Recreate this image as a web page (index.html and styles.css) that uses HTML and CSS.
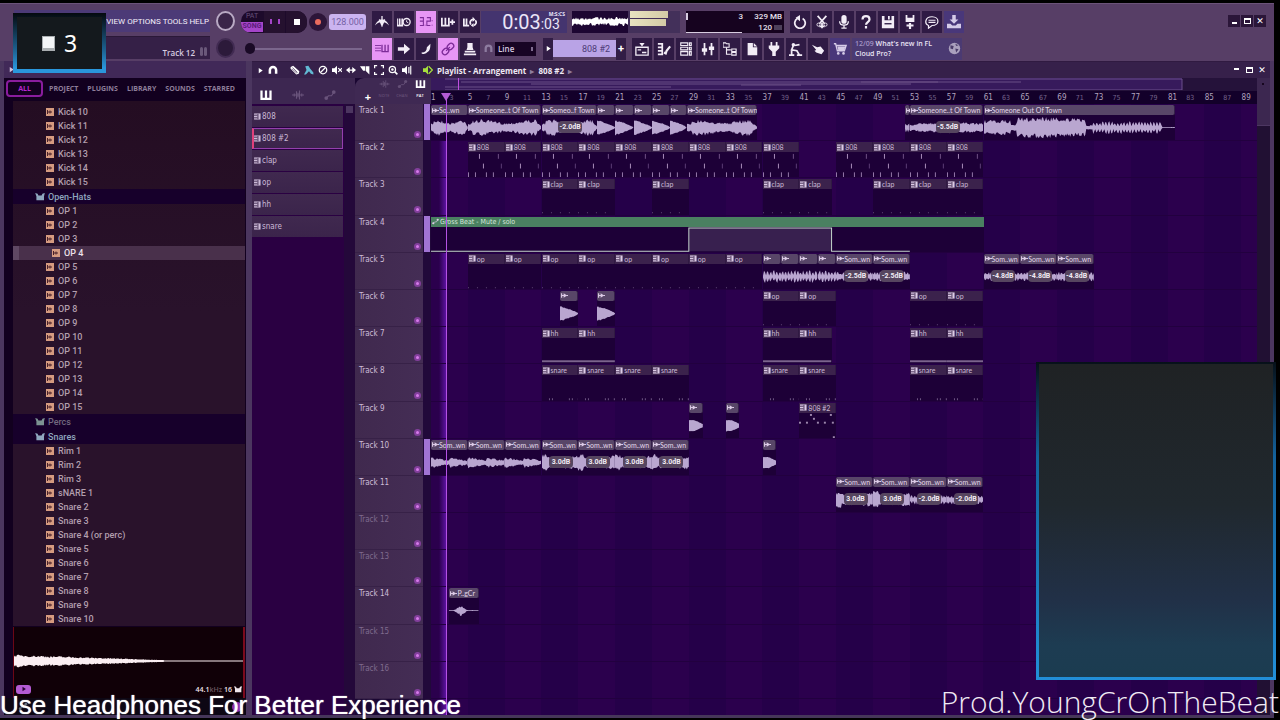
FILE: index.html
```html
<!DOCTYPE html>
<html lang="en">
<head>
<meta charset="utf-8">
<title>Playlist - Arrangement</title>
<link rel="stylesheet" href="styles.css">
</head>
<body>
<svg class="defs" aria-hidden="true">
  <symbol id="i-metro" viewBox="0 0 16 16"><path d="M0 12C2 7 5 5 8 5s6 2 8 7c-3-3-5-4-8-4s-5 1-8 4z" fill="currentColor"/><path d="M8 1v12M5 5l3 7 3-7" fill="none" stroke="currentColor" stroke-width="1.500"/></symbol>
  <symbol id="i-wait" viewBox="0 0 16 16"><path d="M0 4v8h7M3 4v7M6 4v7" fill="none" stroke="currentColor" stroke-width="2"/><circle cx="11" cy="8" r="4" fill="none" stroke="currentColor" stroke-width="1.5"/><path d="M11 6v2l2 1" fill="none" stroke="currentColor"/></symbol>
  <symbol id="i-count" viewBox="0 0 16 16"><path d="M1 3h4v9H1M1 7h4M7 12v-1M9 3h4v4H9v5h4M15 6v1M15 11v1" fill="none" stroke="currentColor" stroke-width="1.200"/></symbol>
  <symbol id="i-keysplus" viewBox="0 0 16 16"><path d="M1 3v9h8V3M5 3v9" fill="none" stroke="currentColor" stroke-width="2"/><path d="M13 5v6M10 8h6" stroke="currentColor" stroke-width="2"/></symbol>
  <symbol id="i-loop" viewBox="0 0 16 16"><path d="M1 4v8h6M4 4v7" fill="none" stroke="currentColor" stroke-width="2"/><path d="M9 11c-2-3 0-6 3-6M12 12c3-1 4-4 2-6" fill="none" stroke="currentColor" stroke-width="2"/><path d="M11 2l3 3-3 3zM12 9v5l-3-2z" fill="currentColor"/></symbol>
  <symbol id="i-type" viewBox="0 0 16 16"><path d="M0 4h7M0 7h7M0 10h7" stroke="currentColor"/><path d="M8 3v8h7V3M11.500 3v8" fill="none" stroke="currentColor" stroke-width="1.500"/></symbol>
  <symbol id="i-arrow" viewBox="0 0 16 16"><path d="M1 6h7V2l7 6-7 6v-4H1z" fill="currentColor"/></symbol>
  <symbol id="i-slide" viewBox="0 0 16 16"><path d="M3 12c4 0 6-2 6-6l4-4c0 4 0 8-4 10-2 2-4 2-6 1z" fill="currentColor"/></symbol>
  <symbol id="i-link" viewBox="0 0 16 16"><g fill="none" stroke="currentColor" stroke-width="1.500" transform="rotate(-45 8 8)"><rect x="0" y="5" width="8" height="6" rx="3"/><rect x="8" y="5" width="8" height="6" rx="3"/><path d="M5 8h6"/></g></symbol>
  <symbol id="i-stamp" viewBox="0 0 16 16"><path d="M5 1h6v5l1 3H4l1-3zM2 10h12v2H2zM1 13h14v2H1z" fill="currentColor"/></symbol>
  <symbol id="i-magnet" viewBox="0 0 16 16"><path d="M3 14V8a5 5 0 0 1 10 0v6" fill="none" stroke="currentColor" stroke-width="4"/></symbol>
  <symbol id="i-play" viewBox="0 0 16 16"><path d="M4 2l9 6-9 6z" fill="currentColor"/></symbol>
  <symbol id="i-plist" viewBox="0 0 16 16"><path d="M1 6h14v9H1zM3 9h4M8 12h5" fill="none" stroke="currentColor" stroke-width="1.500"/><path d="M5 1h6L8 5z" fill="currentColor"/></symbol>
  <symbol id="i-roll" viewBox="0 0 16 16"><path d="M1 2h5v12H1M1 6h4M1 10h4" fill="none" stroke="currentColor" stroke-width="2"/><path d="M8 12l2 1 1-3 4-5" fill="none" stroke="currentColor" stroke-width="2.500"/></symbol>
  <symbol id="i-rack" viewBox="0 0 16 16"><path d="M2 1h8v3H2zM2 6h8v3H2zM2 11h8v4H2zM12 1h2v3h-2zM12 6h2v3h-2zM12 11h2v4h-2z" fill="none" stroke="currentColor" stroke-width="1.300"/></symbol>
  <symbol id="i-mixer" viewBox="0 0 16 16"><path d="M4 1v14M12 1v14" stroke="currentColor" stroke-width="2"/><path d="M1 7h6v4H1zM9 5h6v4H9z" fill="currentColor"/></symbol>
  <symbol id="i-tree" viewBox="0 0 16 16"><path d="M0 1h3l1 1h3v4H0z" fill="none" stroke="currentColor" stroke-width="1.200"/><path d="M4 6v8h5M4 9h5M10 8h5v3h-5zM10 12h5v3h-5z" fill="none" stroke="currentColor" stroke-width="1.300"/></symbol>
  <symbol id="i-file" viewBox="0 0 16 16"><path d="M3 1h6v5h5v9H3z" fill="currentColor"/><path d="M10 1l4 4h-4z" fill="currentColor"/></symbol>
  <symbol id="i-plug" viewBox="0 0 16 16"><path d="M4 0h2v4h4V0h2v4h2v3l-4 4v5H6v-5L2 7V4h2z" fill="currentColor"/></symbol>
  <symbol id="i-tempo" viewBox="0 0 16 16"><circle cx="5" cy="3" r="2" fill="currentColor"/><path d="M5 4L3 9l6 1 3 5M3 9v5M0 15h6M9 15h6M6 4l6-1" fill="none" stroke="currentColor" stroke-width="2"/></symbol>
  <symbol id="i-hand" viewBox="0 0 16 16"><path d="M1 3l6 3 4-1 4 5-3 4-6-2-2-2 2-1z" fill="currentColor"/></symbol>
  <symbol id="i-cart" viewBox="0 0 16 16"><path d="M1 2h2l2 8h8l2-6H4" fill="none" stroke="currentColor" stroke-width="1.500"/><path d="M5 5h9l-1 4H6z" fill="currentColor"/><circle cx="6" cy="13" r="1.500" fill="currentColor"/><circle cx="12" cy="13" r="1.500" fill="currentColor"/></symbol>
  <symbol id="i-undo" viewBox="0 0 16 16"><path d="M5 4a6 6 0 1 0 6 0" fill="none" stroke="currentColor" stroke-width="2"/><path d="M8 0v7L3 3z" fill="currentColor"/></symbol>
  <symbol id="i-cut" viewBox="0 0 16 16"><path d="M3 1l8 9M13 1L5 10M8 9v6M5 13h6" fill="none" stroke="currentColor" stroke-width="2"/><circle cx="4" cy="11" r="1.800" fill="none" stroke="currentColor"/><circle cx="12" cy="11" r="1.800" fill="none" stroke="currentColor"/></symbol>
  <symbol id="i-mic" viewBox="0 0 16 16"><rect x="5" y="0" width="6" height="10" rx="3" fill="currentColor"/><path d="M3 7c0 6 10 6 10 0M8 11v4M5 15h6" fill="none" stroke="currentColor" stroke-width="1.500"/></symbol>
  <symbol id="i-help" viewBox="0 0 16 16"><path d="M4 5c0-5 8-5 8 0 0 3-4 3-4 6M8 12.500v3" fill="none" stroke="currentColor" stroke-width="2.500"/></symbol>
  <symbol id="i-save" viewBox="0 0 16 16"><path d="M1 1h3v5h8V1h3v14H1zM8 1h2v4H8z" fill="currentColor"/><path d="M4 10h8" stroke="#2b1740" stroke-width="1.500"/></symbol>
  <symbol id="i-savenew" viewBox="0 0 16 16"><path d="M3 0h2v3h6V0h2v8H3z" fill="currentColor"/><path d="M8 9v7M4 12h8" stroke="currentColor" stroke-width="2.500"/></symbol>
  <symbol id="i-chat" viewBox="0 0 16 16"><path d="M8 2c9 0 9 10 0 10l-4 3v-3C-1 10 0 2 8 2zM4 6h8M4 8.500h8" fill="none" stroke="currentColor" stroke-width="1.400"/></symbol>
  <symbol id="i-down" viewBox="0 0 16 16"><path d="M6 0h4v5h3l-5 5-5-5h3zM0 10h4l2 2h4l2-2h4v5H0z" fill="currentColor"/></symbol>
  <symbol id="i-globe" viewBox="0 0 16 16"><circle cx="8" cy="8" r="7" fill="#aaa0bd"/><path d="M3 4l4 1-1 4-3-1zM9 8l4 1-3 4zM9 2l4 2-3 1z" fill="#4a3b69"/></symbol>
  <symbol id="i-pencil" viewBox="0 0 16 16"><path d="M1 3l4-2 10 9-1 4-4 1L1 6z" fill="currentColor"/><path d="M4 4l8 8M3 6l8 7" stroke="#38224b"/></symbol>
  <symbol id="i-brush" viewBox="0 0 16 16"><path d="M2 2l5-1 3 5 5 6v3l-4-1-3-4-5 5H0l4-7z" fill="currentColor"/></symbol>
  <symbol id="i-no" viewBox="0 0 16 16"><circle cx="8" cy="8" r="6" fill="none" stroke="currentColor" stroke-width="2"/><path d="M4 12l8-8" stroke="currentColor" stroke-width="2"/></symbol>
  <symbol id="i-mute" viewBox="0 0 16 16"><path d="M0 5h4l4-4v14l-4-4H0z" fill="currentColor"/><path d="M10 5l6 6M16 5l-6 6" stroke="currentColor" stroke-width="2"/></symbol>
  <symbol id="i-slip" viewBox="0 0 16 16"><path d="M0 8l6-5v4h4V3l6 5-6 5V9H6v4z" fill="currentColor"/></symbol>
  <symbol id="i-slice" viewBox="0 0 16 16"><path d="M0 2h8v7H5zM9 2h6v13L9 9z" fill="currentColor"/></symbol>
  <symbol id="i-sel" viewBox="0 0 16 16"><path d="M1 5V1h4M11 1h4v4M15 11v4h-4M5 15H1v-4" fill="none" stroke="currentColor" stroke-width="2"/></symbol>
  <symbol id="i-zoom" viewBox="0 0 16 16"><circle cx="7" cy="7" r="5" fill="none" stroke="currentColor" stroke-width="2"/><circle cx="7" cy="7" r="2" fill="currentColor"/><path d="M11 11l4 4" stroke="currentColor" stroke-width="2.500"/></symbol>
  <symbol id="i-spk" viewBox="0 0 16 16"><path d="M0 5h4l4-4v14l-4-4H0z" fill="currentColor"/><path d="M11 3v10M14 1v14" stroke="currentColor" stroke-width="1.800"/></symbol>
  <symbol id="i-out" viewBox="0 0 16 16"><path d="M0 5h4l4-4v14l-4-4H0z" fill="currentColor"/><path d="M9 2l6 6-6 6" fill="none" stroke="currentColor" stroke-width="2"/></symbol>
  <symbol id="i-keys" viewBox="0 0 16 16"><path d="M2 2v11h12V2M8 2v10" fill="none" stroke="currentColor" stroke-width="3"/></symbol>
  <symbol id="i-wave" viewBox="0 0 16 16"><path d="M0 8h16M3 6v4M6 3v10M8 5v6M10 2v12M13 6v4" stroke="currentColor" stroke-width="1.500"/></symbol>
  <symbol id="i-auto" viewBox="0 0 16 16"><path d="M2 13l4-4h4l4-6" fill="none" stroke="currentColor" stroke-width="1.500"/><circle cx="3" cy="12" r="2.500" fill="currentColor"/><circle cx="13" cy="4" r="2.500" fill="currentColor"/></symbol>
  <symbol id="i-pat" viewBox="0 0 8 8"><path d="M0 .5h7.500v7H0z" fill="currentColor"/><path d="M0 2.500h4M0 5.500h4M4.500 1v6" stroke="#3a2449"/></symbol>
  <symbol id="i-clip" viewBox="0 0 8 8"><path d="M.7 1.500v5M1 4h3M6 4h2" stroke="currentColor" stroke-width="1.300"/><path d="M3 1.500L7 4 3 6.500z" fill="currentColor"/></symbol>
  <symbol id="i-sample" viewBox="0 0 8 8"><path d="M0 0h8v8H0z" fill="#d69b80"/><path d="M1.500 2v4M2 4h4M4 2.500v3" stroke="#4a2029"/></symbol>
  <symbol id="i-folder" viewBox="0 0 12 10"><path d="M0 0l3 1 1 2h4l1-2 3-1-1 4v5H1.500V4z" fill="currentColor"/></symbol>
</svg>

<div class="app">
  <header class="toolbar">
    <div class="group menus">
      <nav class="menu"><button>VIEW</button><button>OPTIONS</button><button>TOOLS</button><button>HELP</button></nav>
      <div class="hint"><span>Track 12</span><i class="pill"></i><i class="pill"></i></div>
    </div>
    <div class="group knobs"><i class="knob"></i><i class="knob dim"></i></div>
    <div class="group transport">
      <div class="row">
        <div class="play"><span class="mode"><span>PAT</span><b>SONG</b></span><button class="pause" aria-label="Pause"></button><button class="stop" aria-label="Stop"></button></div>
        <button class="rec" aria-label="Record"></button>
        <input class="tempo" aria-label="Tempo" value="128.000">
      </div>
      <div class="row"><input class="pos" type="range" min="0" max="100" value="0" aria-label="Song position"></div>
    </div>
    <div class="group main">
      <div class="row">
        <div class="btns" data-icons="metro wait count* keysplus loop"></div>
        <div class="time"><span>0:03<small>:03</small></span><em>M:S:CS</em></div>
        <svg class="scope" viewBox="0 0 56 22" preserveAspectRatio="none" data-scope></svg>
        <div class="peaks"><i></i><i></i></div>
        <div class="cpu"><span class="poly">3</span><span class="mem">329 MB<br>120 <i></i></span></div>
        <div class="btns" data-icons="undo cut mic help save savenew chat down!"></div>
      </div>
      <div class="row">
        <div class="btns" data-icons="type* arrow slide link* stamp"></div>
        <svg class="snapicon"><use href="#i-magnet"/></svg>
        <select class="snap" aria-label="Snap"><option>Line</option></select>
        <button class="mini first" aria-label="Pattern menu"><svg><use href="#i-play"/></svg></button>
        <input class="pattern" aria-label="Pattern" value="808 #2">
        <button class="mini" aria-label="Add pattern">+</button>
        <div class="btns" data-icons="plist roll rack mixer tree file plug tempo hand cart!"></div>
        <a class="news" href="#"><span><s>12/09</s> What's new in FL<br>Cloud Pro?</span><svg><use href="#i-globe"/></svg></a>
      </div>
    </div>
    <div class="winbtns"><button aria-label="Minimize"><i class="min"></i></button><button aria-label="Maximize"><i class="max"></i></button><button aria-label="Close">✕</button></div>
  </header>

  <main class="work">
    <aside class="browser">
      <div class="bhead"><svg><use href="#i-play"/></svg></div>
      <nav class="tabs"><button class="on">ALL</button><button>PROJECT</button><button>PLUGINS</button><button>LIBRARY</button><button>SOUNDS</button><button>STARRED</button></nav>
      <ul class="tree" id="tree"></ul>
      <div class="preview">
        <svg viewBox="0 0 230 68" preserveAspectRatio="none" data-preview></svg>
        <div class="pinfo"><button aria-label="Play sample"><svg><use href="#i-play"/></svg></button><span>44.1<s>kHz</s> 16</span><svg class="fold"><use href="#i-folder"/></svg></div>
      </div>
      <div class="status"><svg><use href="#i-auto"/></svg><i></i></div>
    </aside>

    <section class="playlist">
      <div class="ptitle">
        <div class="tools">
          <svg class="t-s"><use href="#i-play"/></svg><svg class="t-m"><use href="#i-magnet"/></svg><svg><use href="#i-pencil"/></svg><svg class="t-b"><use href="#i-brush"/></svg><svg><use href="#i-no"/></svg><svg><use href="#i-mute"/></svg><svg><use href="#i-slip"/></svg><svg><use href="#i-slice"/></svg><svg><use href="#i-sel"/></svg><svg><use href="#i-zoom"/></svg><svg><use href="#i-spk"/></svg>
        </div>
        <svg class="t-o"><use href="#i-out"/></svg>
        <h1>Playlist - Arrangement <s>▸</s> 808 #2 <s>▸</s></h1>
        <div class="winbtns flat"><button aria-label="Minimize"><i class="min"></i></button><button aria-label="Restore"><i class="max"></i></button><button aria-label="Close">✕</button></div>
      </div>
      <div class="pbody">
        <div class="picker">
          <div class="pktabs"><svg class="on"><use href="#i-keys"/></svg><svg><use href="#i-wave"/></svg><svg><use href="#i-auto"/></svg></div>
          <div class="pklist">
            <ul id="patterns"></ul>
            <div class="pkscroll"><i></i></div>
          </div>
        </div>
        <div class="arrange">
          <div class="ahead">
            <div class="corner">
              <button aria-label="Add track">+</button>
              <span><svg><use href="#i-wave"/></svg>NOTE</span><span><svg><use href="#i-auto"/></svg>CHAN</span><span class="on"><svg><use href="#i-keys"/></svg>PAT</span>
            </div>
            <div class="scales">
              <div class="minimap"><svg viewBox="0 0 826 12" preserveAspectRatio="none" data-map></svg></div>
              <div class="ruler" id="ruler"></div>
            </div>
            <div class="corner2"><i></i></div>
          </div>
          <div class="abody">
            <div class="heads" id="heads"></div>
            <div class="lanes" id="lanes"></div>
            <div class="vscroll"><i></i></div>
          </div>
        </div>
      </div>
    </section>
  </main>
</div>

<div class="badge"><i></i><span>3</span></div>
<div class="panel"></div>
<p class="caption left">Use Headphones For Better Experience</p>
<p class="caption right">Prod.YoungCrOnTheBeat</p>
<script src="script.js"></script>
</body>
</html>
```
FILE: styles.css
```css
* { box-sizing: border-box; }
html, body { height: 100%; margin: 0; }
body { background: #000; overflow: hidden; position: relative; font-family: Roboto, "Open Sans", sans-serif; color: #d8cde0; }
button, input, select { font: inherit; color: inherit; border: 0; padding: 0; margin: 0; background: none; border-radius: 0; }
ul { list-style: none; margin: 0; padding: 0; }
s { text-decoration: none; }
svg { display: block; }
.defs { display: none; }
.app { height: 100%; padding: 3px 6px 2px 0; display: flex; flex-direction: column; }

/* top toolbar */
.toolbar { height: 58px; flex: none; display: flex; background: #573e66; border-top: 1px solid #6b5379; padding: 6px 6px 0 4px; }
.group { display: flex; flex-direction: column; gap: 4px; }
.row { display: flex; height: 23px; align-items: center; }
.menus { width: 206px; padding-left: 10px; }
.menu { height: 22px; background: #4c3a77; display: flex; align-items: center; justify-content: flex-end; gap: 2px; padding-right: 1px; font-size: 8px; font-weight: 400; color: #f4effa; }
.hint { height: 23px; background: #352047; border-top: 1px solid #2a1838; display: flex; align-items: flex-end; justify-content: flex-end; padding: 0 3px 1px 0; font: 600 8px/11px "Open Sans", sans-serif; color: #d8cde0; }
.hint span { margin-right: 4px; }
.pill { width: 3px; height: 9px; margin: 0 0 2px 1px; border-radius: 2px; background: #6a587a; }
.knobs { width: 31px; align-items: center; gap: 7px; padding-top: 1px; }
.knob { width: 19px; height: 20px; border-radius: 50%; background: #3a2549; border: 2px solid #b9aac4; }
.knob.dim { background: #2c1a3a; border-color: #412b52; }
.transport { width: 131px; }
.play { display: flex; width: 66px; height: 22px; background: #1d0a2b; border-radius: 10px; overflow: hidden; align-items: center; }
.mode { width: 22px; font-size: 7px; line-height: 9px; text-align: center; color: #65507a; }
.mode span { display: block; height: 10px; }
.mode b { display: block; height: 10px; background: #a545c9; color: #5b1b7a; border-radius: 0 0 0 6px; }
.pause, .stop { flex: 1; height: 22px; background: #25112f; margin-left: 1px; display: flex; align-items: center; justify-content: center; }
.pause::before { content: ""; width: 6px; height: 5px; border: solid #a545c9; border-width: 0 2px; }
.stop::before { content: ""; width: 6px; height: 6px; background: #fff; }
.rec { width: 18px; height: 18px; border-radius: 50%; background: #2d1539; margin: 0 2px; display: flex; align-items: center; justify-content: center; }
.rec::before { content: ""; width: 6px; height: 6px; border-radius: 50%; background: #ea6b5e; }
.tempo { width: 37px; height: 16px; background: #cbb4f0; border-radius: 3px; color: #7561a5; font-size: 9px; text-align: center; }
.pos { appearance: none; width: 117px; margin-left: 4px; height: 14px; background: linear-gradient(#7b668d, #7b668d) center / 100% 2px no-repeat; }
.pos::-webkit-slider-thumb { appearance: none; width: 10px; height: 11px; border-radius: 5px; background: #1a0a26; }
.btns { display: flex; gap: 2px; }
.btns button { width: 20px; height: 22px; background: #2f1a44; color: #f2ecf6; display: flex; align-items: center; justify-content: center; }
.btns svg { width: 14px; height: 14px; }
.btns .lit { background: #e796f5; color: #7c2b98; }
.btns .blue { background: #49377a; color: #d5cbe8; }
.time { width: 86px; height: 22px; margin: 0 5px 0 1px; background: #44346f; display: flex; justify-content: center; font-size: 20px; line-height: 22px; color: #ebe6f8; position: relative; padding-left: 14px; }
.time small { font-size: 14px; }
.time em { position: absolute; right: 2px; top: 0; font: 700 5px/6px "Open Sans", sans-serif; }
.scope { width: 56px; height: 22px; background: #1d0632; flex: none; }
.peaks { width: 52px; height: 22px; padding: 0 0 0 2px; background: #43305a; display: flex; flex-direction: column; gap: 1px; }
.peaks i { height: 7px; width: 38px; background: linear-gradient(90deg, #e9e3c0, #d3cba6); }
.peaks i + i { width: 36px; }
.cpu { width: 98px; height: 22px; margin: 0 6px 0 6px; background: linear-gradient(#d8cde0, #d8cde0) 0 2px / 2px 7px no-repeat, linear-gradient(90deg, #d8cde0 57%, transparent 57%) 0 100% / 100% 1px no-repeat, #16031f; display: flex; justify-content: flex-end; font-size: 8px; font-weight: 500; line-height: 11px; color: #e8e0ee; }
.poly { margin-right: 7px; }
.mem { text-align: right; width: 34px; white-space: nowrap; padding-right: 2px; }
.mem i { display: inline-block; width: 8px; height: 5px; background: #4d405a; }
.snapicon { width: 9px; height: 11px; color: #8e7ca0; margin: 0 2px 0 4px; }
.snap { appearance: none; width: 41px; height: 14px; padding-left: 3px; font: 600 8px/14px "Open Sans", sans-serif; background: #170424 linear-gradient(#7f6c90, #7f6c90) 36px 5px / 2px 4px no-repeat; }
.mini { width: 10px; height: 22px; background: #321d46; display: flex; align-items: center; justify-content: center; color: #fff; font-size: 11px; font-weight: 700; }
.mini svg { width: 7px; height: 7px; }
.mini.first { margin-left: 7px; }
.mini + .btns { margin-left: 6px; }
.pattern { width: 63px; height: 17px; background: #b9a3e6; color: #4d3b78; text-align: right; padding-right: 6px; font-size: 9px; }
.news { display: flex; width: 110px; height: 22px; margin-left: 2px; padding: 0 1px 0 3px; align-items: center; justify-content: space-between; background: #4b3a72; color: #eae4f4; text-decoration: none; font: 600 7px/10px "Open Sans", sans-serif; white-space: nowrap; }
.news s { color: #a292c4; }
.news svg { width: 13px; height: 13px; flex: none; }
.winbtns { display: flex; margin: 5px 2px 0 auto; gap: 1px; height: 12px; color: #fff; }
.winbtns button { width: 12px; background: #2b1639; display: flex; align-items: center; justify-content: center; font: 700 9px/12px "DejaVu Sans", sans-serif; }
.winbtns .min { width: 5px; height: 2px; background: #fff; margin-top: 4px; }
.winbtns .max { width: 7px; height: 6px; border: 1px solid #fff; border-top-width: 2px; }
.winbtns.flat { margin: 0 2px 0 auto; }
.winbtns.flat button { background: none; }
.flat .min { margin: 0 0 2px; }

.work { flex: 1; min-height: 0; display: flex; background: #4b365f; border-bottom: 3px solid #46365a; padding: 0 4px; }

/* sample browser */
.browser { width: 242px; flex: none; display: flex; flex-direction: column; background: #12001f; }
.bhead { height: 17px; background: #412958; flex: none; padding: 5px 0 0 4px; color: #d0c2dc; }
.bhead svg { width: 7px; height: 7px; }
.tabs { height: 23px; flex: none; display: flex; align-items: center; gap: 9px; padding: 0 0 2px 2px; font: 700 7px/9px "Open Sans", sans-serif; color: #8d7d99; }
.tabs .on { width: 37px; height: 17px; margin-right: -3px; border: 2px solid #8a1d9e; border-radius: 4px; color: #b726cf; }
.tree { flex: 1; min-height: 0; overflow: hidden; margin: 0 1px 0 9px; padding-top: 4px; background: linear-gradient(#240d22, #29122b 40%, #29122b); font-size: 9px; font-weight: 500; color: #b39fae; }
.tree li { height: 14px; line-height: 14px; display: flex; align-items: center; padding-left: 33px; }
.tree svg { width: 8px; height: 8px; margin-right: 4px; }
.tree .dir { height: 15px; padding-left: 22px; background: #17002b; color: #8fa7bf; }
.tree .dir svg { width: 10px; height: 8px; margin-right: 3px; }
.tree .closed { color: #72697f; }
.tree .closed svg { color: #7c9292; }
.tree .sel { padding-left: 33px; background: #49304b; color: #eee2ea; border-left: 6px solid #5f4863; }
.preview { height: 71px; flex: none; margin: 1px 1px 0 9px; background: #100007; border-left: 1px solid #6c0715; border-right: 2px solid #7b0a1c; display: grid; }
.preview > * { grid-area: 1 / 1; }
.preview > svg { width: 100%; height: 68px; }
.pinfo { align-self: end; height: 18px; display: flex; align-items: center; font: 600 7px/9px "Open Sans", sans-serif; color: #f0e6ec; padding: 0 1px 0 2px; }
.pinfo button { width: 15px; height: 9px; border-radius: 3px; background: #b45bd3; color: #2a0635; display: flex; align-items: center; justify-content: center; margin-right: auto; }
.pinfo button svg { width: 6px; height: 6px; }
.pinfo s { color: #6a565f; }
.fold { width: 8px; height: 7px; margin-left: 2px; }
.status { height: 17px; flex: none; background: #0d0714; display: flex; align-items: center; justify-content: space-between; padding: 0 4px 0 12px; color: #65707c; }
.status svg { width: 14px; height: 9px; }
.status i { width: 10px; height: 10px; border-radius: 50%; background: #8a2ea8; }

/* playlist window */
.playlist { flex: 1; min-width: 0; display: flex; flex-direction: column; margin-left: 6px; background: #2a0042; }
.ptitle { height: 17px; flex: none; display: flex; align-items: center; background: #36204a; border-top: 1px solid #301a41; color: #fff; }
.tools { display: flex; gap: 4px; padding-left: 5px; align-items: center; }
.tools svg { width: 10px; height: 10px; }
.tools .t-s { width: 7px; height: 7px; }
.tools .t-m { margin-right: 8px; }
.tools .t-b { color: #62b9d4; }
.t-o { width: 10px; height: 10px; margin: 0 4px 0 11px; color: #a6e03c; }
.ptitle h1 { margin: 0; font: 700 8px/15px "Open Sans", sans-serif; color: #efe9f3; }
.ptitle s { color: #8f7e9e; margin: 0 2px; }
.pbody { flex: 1; min-height: 0; display: flex; }
.picker { width: 103px; flex: none; display: flex; flex-direction: column; }
.pktabs { height: 26px; flex: none; background: #3d2751; display: flex; gap: 20px; padding: 11px 0 0 8px; color: #69537b; }
.pktabs svg { width: 12px; height: 12px; }
.pktabs .on { color: #fff; }
.pklist { flex: 1; display: flex; justify-content: space-between; }
.pklist ul { width: 91px; display: flex; flex-direction: column; gap: 1px; padding-top: 2px; }
.pklist li { height: 21px; background: linear-gradient(#40294f, #3b244b); display: flex; align-items: center; padding-left: 2px; font: 8px/12px "DejaVu Sans Condensed", sans-serif; color: #cbb9d6; }
.pklist li svg { width: 7px; height: 7px; margin-right: 1px; }
.pklist .sel { border: 1px solid #9340ac; border-left: 2px solid #e0407a; padding-left: 0; }
.pkscroll { width: 11px; background: #24083a; }
.pkscroll i { display: block; height: 9px; margin: 1px 1px 0; background: #4c3560; border: 1px solid #24083a; }
.arrange { flex: 1; min-width: 0; display: flex; flex-direction: column; background: #1a0632; }
.ahead { height: 26px; flex: none; display: flex; }
.corner { width: 76px; flex: none; background: #3f2953; border-radius: 9px 0 0 0; display: flex; color: #644f76; font: 600 4px/6px "Open Sans", sans-serif; }
.corner span { width: 18px; display: flex; flex-direction: column; align-items: center; gap: 4px; padding-top: 1px; }
.corner svg { width: 11px; height: 10px; }
.corner .on { color: #fff; }
.corner button { width: 20px; padding: 12px 0 0 6px; color: #fff; font-size: 11px; line-height: 12px; font-weight: 700; font-family: "Open Sans", sans-serif; }
.scales { flex: 1; min-width: 0; }
.minimap { height: 13px; background: #25123a; }
.minimap svg { width: 100%; height: 12px; }
.ruler { height: 13px; display: flex; background: #13002a; font: 8px/14px "DejaVu Sans Condensed", sans-serif; color: #a08fae; }
.ruler span { flex: 20 1 0; min-width: 0; overflow: visible; white-space: nowrap; font-size: 7px; color: #75648a; }
.ruler .major { font-size: 8px; color: #b0a3bd; }
.ruler .last { flex-grow: 17; }
.corner2 { width: 13px; background: #3c2750; }
.corner2 i { display: block; width: 2px; height: 2px; margin: 5px; background: #16061f; }
.abody { flex: 1; min-height: 0; display: flex; }
.heads { width: 76px; flex: none; margin-bottom: 16px; display: grid; grid-auto-rows: 1fr; }
.head { display: flex; background: #21093a; }
.head .name { width: 68px; background: linear-gradient(90deg, #40294e, #442d55); border-bottom: 1px solid #372147; display: flex; justify-content: space-between; padding: 1px 2px 0 4px; font: 8px/12px "DejaVu Sans Condensed", sans-serif; color: #cdbdd7; }
.head .empty { color: #7f6a8e; }
.head button { width: 7px; height: 7px; border-radius: 50%; background: #d67aea; border: 2px solid #833f9c; align-self: flex-end; margin-bottom: 2px; }
.head .strip { width: 6px; margin: 0 0 1px 1px; }
.head .used { background: #a174d4; }
.lanes { flex: 1; min-width: 0; position: relative; padding-bottom: 16px; display: grid; grid-auto-rows: 1fr; background: repeating-linear-gradient(90deg, #2b004d 0, #2b004d 4.459%, #250049 4.459%, #250049 8.918%); }
.lane { position: relative; border-bottom: 1px solid #22003f; }
.clip { position: absolute; top: 1px; bottom: 0; display: flex; flex-direction: column; background: #1d0037; overflow: hidden; }
.clip header { height: 10px; flex: none; display: flex; align-items: center; padding-left: 1px; background: #3b224c; border-right: 1px solid #301a42; font: 7px/10px Lato, sans-serif; color: #cbbad6; white-space: nowrap; }
.clip header svg { width: 7px; height: 7px; margin-right: 1px; flex: none; color: #dccbe6; }
.clip.audio header { background: #584668; color: #e2d7e9; border-color: #35204a; border-radius: 2px; }
.clip.audio header svg { margin-right: 0; }
.clip .wave { width: 100%; flex: 1; min-height: 0; }
.clip.auto header { background: #4a8061; border: 0; color: #d5e6db; font-family: "DejaVu Sans Condensed", sans-serif; }
.gain { position: absolute; top: 16px; left: 50%; margin-left: -11px; width: 24px; height: 12px; border-radius: 4px; background: #56455f; color: #f1ebf4; font: 700 7px/12px Roboto, sans-serif; text-align: center; white-space: nowrap; }
.glow { position: absolute; top: 0; bottom: 0; left: 1%; width: 7px; background: linear-gradient(90deg, transparent, #5b12a0); }
.playhead { position: absolute; top: -9px; bottom: 0; left: 1%; width: 8px; border-right: 1px solid #b552e4; }
.playhead::before { content: ""; position: absolute; right: -5px; top: -2px; border: solid transparent; border-width: 8px 5px 0; border-top-color: #b45bd3; }
.vscroll { width: 13px; background: #211033; }
.vscroll i { display: block; height: 22px; background: #3c2750; border-bottom: 1px solid #4d3762; }

/* floating overlays */
.badge { position: absolute; left: 13px; top: 13px; width: 93px; height: 60px; border: 4px solid; border-image: linear-gradient(#04090e, #1c5f8d 60%, #2a97dc 92%) 4; background: #14191d; display: flex; align-items: center; justify-content: center; gap: 9px; color: #fff; font: 23px/30px "Noto Sans", sans-serif; }
.badge i { width: 13px; height: 15px; background: #f3f5f7; border: 1px solid #a9aeb1; border-bottom-width: 3px; }
.panel { position: absolute; right: 4px; top: 362px; bottom: 40px; width: 240px; border: 3px solid; border-image: linear-gradient(#071018, #14629c 30%, #228fd8) 3; border-top-width: 2px; background: linear-gradient(#1f2224, #20282e 45%, #213047 75%, #1d3c52 90%, #1b3c50); }
.caption { position: absolute; margin: 0; color: #fff; white-space: nowrap; }
.caption.left { left: 0; bottom: 0; font: 26px/30px "Liberation Sans", sans-serif; text-shadow: 0 0 1px #fff; }
.caption.right { right: 1px; bottom: 0; font: 300 30px/36px "Open Sans", sans-serif; color: #f0eaf4; }
```
FILE: script.js
```js
const BARS = 89.7;
const $ = s => document.querySelector(s);
const icon = (id, cls = '') => `<svg class="${cls}"><use href="#i-${id}"/></svg>`;
const pct = n => (n / BARS * 100).toFixed(3) + '%';
let seed = 7;
const rnd = () => (seed = (seed * 16807) % 2147483647) / 2147483647;

document.querySelectorAll('[data-icons]').forEach(box => {
  box.innerHTML = box.dataset.icons.split(' ').map(n => {
    const id = n.replace(/[*!]/, '');
    const cls = n.endsWith('*') ? 'lit' : n.endsWith('!') ? 'blue' : '';
    return `<button class="${cls}" aria-label="${id}">${icon(id)}</button>`;
  }).join('');
});

/* browser tree */
const range = (name, a, b) => Array.from({ length: b - a + 1 }, (_, i) => `${name} ${a + i}`);
const rows = [...range('Kick', 10, 15), '/Open-Hats', ...range('OP', 1, 15), '-Percs', '/Snares',
  ...range('Rim', 1, 3), 'sNARE 1', 'Snare 2', 'Snare 3', 'Snare 4 (or perc)', ...range('Snare', 5, 10)];
$('#tree').innerHTML = rows.map(r => {
  if (r[0] === '/' || r[0] === '-') return `<li class="dir ${r[0] === '-' ? 'closed' : ''}">${icon('folder')}${r.slice(1)}</li>`;
  return `<li class="${r === 'OP 4' ? 'sel' : ''}">${icon('sample')}${r}</li>`;
}).join('');

$('#patterns').innerHTML = ['808', '808 #2', 'clap', 'op', 'hh', 'snare']
  .map((p, i) => `<li class="${i === 1 ? 'sel' : ''}">${icon('pat')}${p}</li>`).join('');

/* ruler */
let ruler = '';
for (let b = 1; b <= 89; b += 2) ruler += `<span class="${b % 4 === 1 ? 'major' : ''} ${b === 89 ? 'last' : ''}">${b}</span>`;
$('#ruler').innerHTML = ruler;

/* waveforms: envelope t in 0..1 gives amplitude 0..1 */
const env = {
  full: t => .72 * (t < .06 ? .6 : t > .92 ? (1 - t) * 9 + .15 : 1) * (.8 + .2 * Math.sin(t * 9)),
  decay: t => .68 * Math.pow(1 - t, .7),
  hit: t => t < .4 ? .5 : .5 - (t - .4) * .6,
  noise: (t, i) => i % 3 ? .55 : .15,
  soft: t => .5 * (1 - .6 * ((t * 2) % 1)),
  loud: t => t < .15 ? .75 : t > .75 ? .6 : .5,
  thin: (t, i) => i % 3 ? .42 : .2,
  swell: t => t < .12 ? .3 : .5 - .2 * Math.abs(t - .5),
  long: (t, i) => t < .14 ? .65 : t < .17 ? .3 : t < .53 ? .95 - Math.abs(t - .3) * .8 : t < .57 ? .2 : t < .93 ? (i % 3 ? .55 : .2) : .04,
  blob: t => t > .7 || t < .12 ? .04 : .5 * Math.max(.08, 1 - Math.abs(t - .4) * 4)
};
const rough = { noise: .5, thin: .5, long: .45, hit: .1, decay: .2 };
function wave(kind, bars) {
  const n = Math.max(10, Math.round(bars * 9.2));
  const up = [], dn = [];
  for (let i = 0; i <= n; i++) {
    const a = env[kind](i / n, i), k = rough[kind] || .45;
    up.push(`${i},${(13 - 12 * a * (1 - k * rnd())).toFixed(1)}`);
    dn.unshift(`${i},${(13 + 12 * a * (1 - k * rnd())).toFixed(1)}`);
  }
  return `<svg class="wave" viewBox="0 0 ${n} 26" preserveAspectRatio="none"><polygon points="${up.concat(dn).join(' ')}" fill="#b9a6d0"/></svg>`;
}
function notes(name, bars) {
  const w = Math.round(bars * 9.2);
  let r = '';
  const put = (x, y, ww, h, c) => { if (x < w) r += `<rect x="${x}" y="${y}" width="${ww}" height="${h}" fill="${c}"/>`; };
  if (name === '808') {
    put(11, 2, 1, 5, '#a98dba'); put(30, 2, 1, 5, '#6f5085');
    put(15, 12, 1, 5, '#a98dba'); put(33, 12, 1, 5, '#5b3d75');
    [0, 7, 18, 25].forEach(x => put(x, 21, 1, 5, '#9478a9'));
  } else if (name === 'hh') put(0, 23, w, 2, '#7b648d');
  else if (name === 'snare') [7, 10, 27, 30, 36].forEach(x => put(x, 24, 1, 2, '#6d5483'));
  else if (name === '808 #2') [[11, 1], [14, 5], [0, 9], [7, 9], [18, 9], [25, 9], [31, 1], [33, 9], [34, 24]].forEach(p => put(p[0], p[1], 2, 2, '#9c86ac'));
  else [0, 9, 18, 27].forEach(x => put(x, 24, 1, 1, '#604777'));
  return `<svg class="wave" viewBox="0 0 ${w} 26" preserveAspectRatio="none">${r}</svg>`;
}
const box = (cls, a, b, inner) => `<div class="clip ${cls}" style="left:${pct(a - 1)};width:${pct(b - a)}">${inner}</div>`;
const A = (a, b, kind, label = '', gain = '') => box('audio', a, b,
  `<header>${icon('clip')}${label}</header>${wave(kind, b - a)}${gain ? `<span class="gain">${gain}</span>` : ''}`);
const P = (name, a, b) => box('pat', a, b, `<header>${icon('pat')}${name}</header>${notes(name, b - a)}`);
const Ps = (name, starts, len = 4) => starts.map(s => P(name, s, s + len)).join('');
const S = 'Som..wn';

const lanes = {
  1: A(1, 5, 'full', 'So..wn') + A(5, 13, 'full', 'Someone..t Of Town') + A(13, 19, 'full', 'Someo..f Town', '-2.0dB')
    + A(19, 21, 'decay') + A(21, 23, 'decay') + A(23, 25, 'decay') + A(25, 27, 'decay') + A(27, 28.8, 'decay')
    + A(28.8, 36.4, 'full', 'Someone..t Of Town') + A(52.5, 53, 'thin') + A(53, 61, 'swell', 'Someone..t Of Town', '-5.5dB')
    + A(61, 81.8, 'long', 'Someone Out Of Town'),
  2: Ps('808', [5, 9, 13, 17, 21, 25, 29, 33, 37, 45, 49, 53, 57]),
  3: Ps('clap', [13, 17, 25, 37, 49, 53, 57]) + P('clap', 41, 44.5),
  4: box('auto', 1, 61, `<header>${icon('auto')}Gross Beat - Mute / solo</header><svg class="wave" viewBox="0 0 600 26" preserveAspectRatio="none"><path d="M280 25V1H435V25z" fill="#38204f"/><path d="M0 25H280V1H435V25H520" fill="none" stroke="#c3d3cb" vector-effect="non-scaling-stroke"/></svg>`),
  5: Ps('op', [5, 9, 13, 17, 21, 25, 29, 33]) + [37, 39, 41, 43].map(b => A(b, b + 2, 'noise')).join('')
    + A(45, 49, 'thin', S, '-2.5dB') + A(49, 53, 'thin', S, '-2.5dB') + [61, 65, 69].map(b => A(b, b + 4, 'thin', S, '-4.8dB')).join(''),
  6: A(15, 17, 'decay') + A(19, 21, 'decay') + Ps('op', [37, 41, 53, 57]),
  7: Ps('hh', [13, 17, 37, 53, 57]) + P('hh', 41, 44.5),
  8: Ps('snare', [13, 17, 21, 25, 37, 41, 53, 57]),
  9: A(29, 30.5, 'hit') + A(33, 34.5, 'hit') + P('808 #2', 41, 45),
  10: [1, 5, 9].map(b => A(b, b + 4, 'soft', S)).join('') + [13, 17, 21, 25].map(b => A(b, b + 4, 'loud', S, '3.0dB')).join('') + A(37, 38.5, 'hit'),
  11: A(45, 49, 'loud', S, '3.0dB') + A(49, 53, 'loud', S, '3.0dB') + A(53, 57, 'thin', S, '-2.0dB') + A(57, 61, 'thin', S, '-2.0dB'),
  14: A(3, 6.2, 'blob', 'P..gCr')
};
let heads = '', body = '';
for (let t = 1; t <= 16; t++) {
  const used = [1, 4, 10].includes(t) ? 'used' : '';
  heads += `<div class="head"><div class="name ${lanes[t] ? '' : 'empty'}">Track ${t}<button aria-label="Mute track ${t}"></button></div><i class="strip ${used}"></i></div>`;
  body += `<div class="lane">${lanes[t] || ''}</div>`;
}
$('#heads').innerHTML = heads;
$('#lanes').innerHTML = '<i class="glow"></i>' + body + '<i class="playhead"></i>';

/* small displays */
let pts = '', low = '';
for (let i = 0; i <= 56; i++) { pts += `${i},${(9 - rnd() * 3).toFixed(1)} `; low = `${i},${(12 + rnd() * 3).toFixed(1)} ` + low; }
$('[data-scope]').innerHTML = `<polygon points="${pts}${low}" fill="#fff"/>`;
pts = ''; low = '';
for (let i = 0; i <= 230; i++) {
  const a = i > 150 ? .6 : 6 * (1 - i / 165) * (.6 + .4 * rnd()) + .5;
  pts += `${i},${(34 - a).toFixed(1)} `; low = `${i},${(34 + a).toFixed(1)} ` + low;
}
$('[data-preview]').innerHTML = `<polygon points="${pts}${low}" fill="#fbeef2"/>`;
$('[data-map]').innerHTML = `<rect width="751" height="12" fill="#371a5c"/><path d="M14 1H751V12H14" fill="none" stroke="#6c4f8c"/>
<path d="M30 4H507M100 6H480M14 9H240M310 7H370M430 4H590" stroke="#6a4f86"/><path d="M27.500 0V12" stroke="#c04fe0"/>`;
```
